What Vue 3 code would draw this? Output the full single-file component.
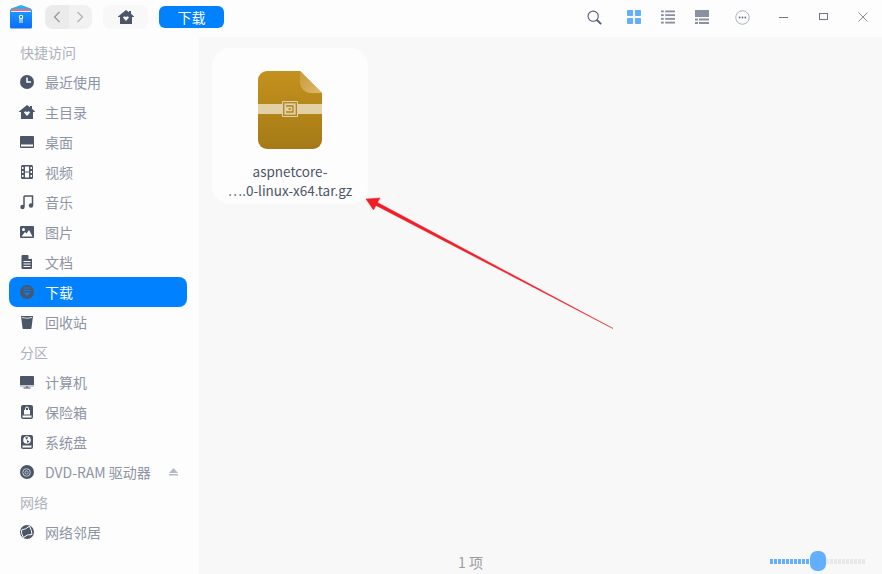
<template>
  <div class="window">
    <header class="titlebar">
      <svg class="logo" width="22" height="24" viewBox="0 0 22 24">
        <defs>
          <linearGradient id="logoBlue" x1="0" y1="0" x2="0" y2="1">
            <stop offset="0" stop-color="#1c9dff" />
            <stop offset="1" stop-color="#0d6cf8" />
          </linearGradient>
        </defs>
        <path d="M1 3.500 11 0l10 3.500V7H1z" fill="#27b0f8" />
        <path d="M0 5.500q0-1.500 1.500-1.500h19q1.500 0 1.500 1.500V22q0 1.500-1.500 1.500h-19Q0 23.500 0 22z" fill="url(#logoBlue)" />
        <rect x="1.500" y="4" width="19" height="2" fill="#f56a78" />
        <rect x="1" y="6" width="20" height="1" fill="#fff" opacity=".85" />
        <circle cx="11" cy="12" r="1.700" fill="none" stroke="#fff" stroke-width="1.100" />
        <path d="M10 13.500V18M12 13.500V18" stroke="#fff" stroke-width="1" />
      </svg>

      <div class="nav-group">
        <button class="nav-btn back">
          <svg width="10" height="14" viewBox="0 0 10 14"><path d="M7.500 2 2.500 7l5 5" fill="none" stroke="#8b93a2" stroke-width="1.100" /></svg>
        </button>
        <button class="nav-btn">
          <svg width="10" height="14" viewBox="0 0 10 14"><path d="M2.500 2l5 5-5 5" fill="none" stroke="#a9afbb" stroke-width="1.100" /></svg>
        </button>
      </div>

      <button class="home-btn">
        <svg width="16" height="14" viewBox="0 0 16 14"><path :d="homePath" fill="#4d5568" fill-rule="evenodd" /></svg>
      </button>

      <button class="crumb">下载</button>

      <div class="tools">
        <svg class="search" width="15" height="15" viewBox="0 0 17 17">
          <circle cx="7" cy="7" r="5.800" fill="none" stroke="#566176" stroke-width="1.300" />
          <path d="M11 11l5 5" stroke="#566176" stroke-width="2.200" />
        </svg>
        <svg class="grid" width="14" height="14" viewBox="0 0 15 15" fill="#62aeff">
          <rect width="6.500" height="6.500" rx=".8" />
          <rect x="8.500" width="6.500" height="6.500" rx=".8" />
          <rect y="8.500" width="6.500" height="6.500" rx=".8" />
          <rect x="8.500" y="8.500" width="6.500" height="6.500" rx=".8" />
        </svg>
        <svg class="list" width="14" height="14" viewBox="0 0 15 15" fill="#8a909e">
          <rect y="0.500" width="3" height="2" /><rect x="4.500" y="0.500" width="10.500" height="2" />
          <rect y="4.500" width="3" height="2" /><rect x="4.500" y="4.500" width="10.500" height="2" />
          <rect y="8.500" width="3" height="2" /><rect x="4.500" y="8.500" width="10.500" height="2" />
          <rect y="12.500" width="3" height="2" /><rect x="4.500" y="12.500" width="10.500" height="2" />
        </svg>
        <svg class="list" width="14" height="14" viewBox="0 0 14 14" fill="#8a909e">
          <rect width="14" height="7" />
          <rect y="8.500" width="3" height="2" /><rect x="4" y="8.500" width="10" height="2" />
          <rect y="12" width="3" height="2" /><rect x="4" y="12" width="10" height="2" />
        </svg>
        <svg class="menu-icon" width="15" height="15" viewBox="0 0 16 16">
          <circle cx="8" cy="8" r="7.200" fill="none" stroke="#a8adb9" stroke-width="1" />
          <circle cx="5" cy="8" r="1" fill="#6a7180" /><circle cx="8" cy="8" r="1" fill="#6a7180" /><circle cx="11" cy="8" r="1" fill="#6a7180" />
        </svg>
        <svg class="win-min" width="9" height="10" viewBox="0 0 9 10"><path d="M0 5.500h9" stroke="#6f7683" stroke-width="1" /></svg>
        <svg class="win-max" width="9" height="10" viewBox="0 0 9 10"><rect x=".5" y="1.500" width="8" height="6" fill="none" stroke="#6f7683" stroke-width="1" /></svg>
        <svg class="win-close" width="10" height="10" viewBox="0 0 10 10"><path d="M.5.500l9 9M9.500.500l-9 9" stroke="#7d8390" stroke-width=".9" /></svg>
      </div>
    </header>

    <div class="body">
      <aside class="sidebar">
        <template v-for="item in sidebar" :key="item.label">
          <div v-if="item.heading" class="group-title">{{ item.label }}</div>
          <div v-else :class="['side-item', { active: item.active }]">
            <svg class="side-icon" width="16" height="16" viewBox="0 0 16 16" v-html="icons[item.icon]"></svg>
            <span class="side-label">{{ item.label }}</span>
            <svg v-if="item.eject" class="eject" width="9" height="8" viewBox="0 0 9 8" fill="#b4b9c3">
              <path d="M4.500 0 9 5H0z" /><rect y="6" width="9" height="1.500" />
            </svg>
          </div>
        </template>
      </aside>

      <main class="content">
        <div class="file-grid">
          <div class="file-card">
            <svg width="66" height="80" viewBox="0 0 66 80" class="file-icon">
              <defs>
                <linearGradient id="archive" x1="0" y1="0" x2="0" y2="1">
                  <stop offset="0" stop-color="#c3911d" />
                  <stop offset="1" stop-color="#a57a16" />
                </linearGradient>
                <linearGradient id="fold" x1="0" y1="0" x2="1" y2="1">
                  <stop offset="0" stop-color="#c79a35" />
                  <stop offset="1" stop-color="#deb970" />
                </linearGradient>
              </defs>
              <path d="M10 1h33l22 22v47a9 9 0 0 1-9 9H10a9 9 0 0 1-9-9V10a9 9 0 0 1 9-9z" fill="url(#archive)" />
              <path d="M43 1l22 22H54a11 11 0 0 1-11-11z" fill="url(#fold)" />
              <rect x="1" y="34" width="64" height="10" fill="#e2d0a6" />
              <rect x="25" y="31" width="16" height="16" rx="1" fill="#e2d0a6" />
              <rect x="26.700" y="32.700" width="12.600" height="12.600" fill="none" stroke="#ae8420" stroke-width="1.300" />
              <path d="M29 36h7v6h-7M31.500 39h2.500" fill="none" stroke="#ae8420" stroke-width="1.300" />
            </svg>
            <div class="file-name">aspnetcore-<br />⋯.0-linux-x64.tar.gz</div>
          </div>
        </div>
        <footer class="statusbar">
          <span class="count">1 项</span>
          <div class="slider">
            <span class="track on"></span>
            <span class="thumb"></span>
            <span class="track off"></span>
          </div>
        </footer>
        <!-- annotation drawn over the screenshot -->
        <svg class="arrow" width="260" height="145" viewBox="0 0 260 145">
          <path d="M6 9 20 8 17.500 12.500 253 138.500 16 15.500 13.500 20z" fill="#f01f27" stroke="#f01f27" stroke-width=".5" stroke-linejoin="round" />
        </svg>
      </main>
    </div>
  </div>
</template>

<script setup>
const homePath = 'M8 0l3 2.300V1h2v2.800L16 6.500V7h-2v7H2V7H0v-.5zM5 7.500 8 11l3-3.500L9.800 6.300 8 7 6.200 6.300z'

const icons = {
  clock: '<circle cx="8" cy="8" r="7" fill="#4d5568"/><path d="M8 3.500V8h4" fill="none" stroke="#fff" stroke-width="1.500"/>',
  home: `<path d="${homePath}" transform="translate(0 1)" fill="#4d5568" fill-rule="evenodd"/>`,
  desktop: '<path d="M2 2h12a1 1 0 0 1 1 1v10a1 1 0 0 1-1 1H2a1 1 0 0 1-1-1V3a1 1 0 0 1 1-1z" fill="#4d5568"/><rect x="2" y="10.500" width="12" height="2" fill="#fff"/>',
  video: '<rect x="2" y="1" width="12" height="14" rx="1.500" fill="#4d5568"/><g fill="#fff"><rect x="3" y="3" width="1.500" height="2"/><rect x="3" y="7" width="1.500" height="2"/><rect x="3" y="11" width="1.500" height="2"/><rect x="11.500" y="3" width="1.500" height="2"/><rect x="11.500" y="7" width="1.500" height="2"/><rect x="11.500" y="11" width="1.500" height="2"/><rect x="6" y="2.500" width="4" height="5"/><rect x="6" y="8.500" width="4" height="5"/></g>',
  music: '<path d="M5 12.500V3q0-1 1-1h7.500v9" fill="none" stroke="#4d5568" stroke-width="1.500"/><circle cx="3.500" cy="13" r="2.200" fill="#4d5568"/><circle cx="12" cy="11.500" r="2.200" fill="#4d5568"/>',
  image: '<rect x="1" y="2" width="14" height="12" rx="1" fill="#4d5568"/><circle cx="4.500" cy="5.500" r="1.500" fill="#fff"/><path d="M2.500 12.500 6 8l1.500 1.500L10 6l3.500 6.500z" fill="#fff"/>',
  doc: '<path d="M3.500 1H9l4 4v9a1 1 0 0 1-1 1H3.500a1 1 0 0 1-1-1V2a1 1 0 0 1 1-1z" fill="#4d5568"/><path d="M9.500 1v4h3.500z" fill="#fff"/><path d="M4.500 7.500h7M4.500 10h7M4.500 12.500h7" stroke="#fff" stroke-width="1"/>',
  download: '<circle cx="8" cy="8" r="7" fill="#4d5568"/><path d="M4.500 4h7M4.500 6.500h7" stroke="#0081ff" stroke-width="1.200"/><path d="M4.500 8.500h7L8 12z" fill="#0081ff"/>',
  trash: '<path d="M2 2h12L12.500 14a1 1 0 0 1-1 1h-7a1 1 0 0 1-1-1z" fill="#4d5568"/><path d="M3 3.500q5 1.500 10 0" fill="none" stroke="#fff" stroke-width=".8"/>',
  computer: '<path d="M1 3a1 1 0 0 1 1-1h12a1 1 0 0 1 1 1v8H1z" fill="#4d5568"/><rect x="1" y="11.500" width="14" height="1" fill="#8f95a3"/><rect x="7" y="12.500" width="2" height="1" fill="#4d5568"/><rect x="4.500" y="13.500" width="7" height="1" fill="#4d5568"/>',
  vault: '<rect x="2" y="1" width="12" height="14" rx="2" fill="#4d5568"/><rect x="3.500" y="11.500" width="9" height="2" fill="#fff"/><rect x="5" y="6" width="6" height="4.500" fill="#fff"/><path d="M6.500 6V4.500a1.500 1.500 0 0 1 3 0V6" fill="none" stroke="#fff" stroke-width="1"/>',
  disk: '<rect x="2" y="1" width="12" height="14" rx="2" fill="#4d5568"/><rect x="3.500" y="11.500" width="9" height="2" fill="#fff"/><circle cx="8" cy="6" r="3.800" fill="#fff"/><path d="M8 6 6 3.500 9 3zM8 6l2.500 1.500L8 9z" fill="#4d5568"/>',
  dvd: '<circle cx="8" cy="8" r="7" fill="#4d5568"/><circle cx="7.500" cy="8.500" r="3.800" fill="none" stroke="#c6cad2" stroke-width="1"/><circle cx="7.500" cy="8.500" r="1.600" fill="none" stroke="#c6cad2" stroke-width="1"/>',
  network: '<circle cx="8" cy="8" r="7" fill="#4d5568"/><path d="M2.500 6Q7 5.500 10.500 2M10.500 2q2.500 5 2.500 8.500M13 10.500Q8 10 4.500 13.500M2.500 6q-.5 4 2 7.500" fill="none" stroke="#fff" stroke-width="1"/>'
}

const sidebar = [
  { label: '快捷访问', heading: true },
  { label: '最近使用', icon: 'clock' },
  { label: '主目录', icon: 'home' },
  { label: '桌面', icon: 'desktop' },
  { label: '视频', icon: 'video' },
  { label: '音乐', icon: 'music' },
  { label: '图片', icon: 'image' },
  { label: '文档', icon: 'doc' },
  { label: '下载', icon: 'download', active: true },
  { label: '回收站', icon: 'trash' },
  { label: '分区', heading: true },
  { label: '计算机', icon: 'computer' },
  { label: '保险箱', icon: 'vault' },
  { label: '系统盘', icon: 'disk' },
  { label: 'DVD-RAM 驱动器', icon: 'dvd', eject: true },
  { label: '网络', heading: true },
  { label: '网络邻居', icon: 'network' }
]
</script>

<style>
html, body {
  margin: 0;
  background: #f8f8f8;
}
</style>

<style scoped>
.window {
  width: 882px;
  height: 574px;
  display: flex;
  flex-direction: column;
  overflow: hidden;
  font-family: "Noto Sans CJK SC", "Noto Sans", sans-serif;
  font-size: 14px;
}

button {
  border: none;
  padding: 0;
  font-family: inherit;
}

.titlebar {
  height: 37px;
  flex: none;
  display: flex;
  align-items: center;
  background: #fdfdfe;
  padding: 0 0 3px 10px;
  box-sizing: border-box;
}

.logo {
  margin-right: 13px;
}

.nav-group {
  width: 47px;
  height: 24px;
  display: flex;
  border-radius: 8px;
  overflow: hidden;
  background: #f1f1f2;
}

.nav-btn {
  flex: 1;
  display: flex;
  align-items: center;
  justify-content: center;
  background: transparent;
}

.nav-btn.back {
  background: #ebebec;
}

.home-btn {
  width: 45px;
  height: 24px;
  margin-left: 11px;
  display: flex;
  align-items: center;
  justify-content: center;
  border-radius: 8px;
  background: #f8f8f8;
}

.crumb {
  width: 65px;
  height: 22px;
  margin-left: 11px;
  border-radius: 6px;
  background: #0081ff;
  color: #fff;
  font-size: 14px;
  line-height: 20px;
}

.tools {
  margin-left: auto;
  display: flex;
  align-items: center;
  padding-right: 14px;
}

.search { margin-right: 25px; }
.grid { margin-right: 20px; }
.list { margin-right: 20px; }
.list + .menu-icon { margin-left: 6px; }
.menu-icon { margin-right: 29px; }
.win-min { margin-right: 31px; }
.win-max { margin-right: 30px; }

.body {
  flex: 1;
  display: flex;
  min-height: 0;
}

.sidebar {
  width: 199px;
  flex: none;
  box-sizing: border-box;
  background: #fdfdfe;
}

.group-title {
  height: 30px;
  line-height: 30px;
  padding-left: 20px;
  color: #adb1bb;
}

.side-item {
  height: 30px;
  margin: 0 12px 0 9px;
  padding-left: 10px;
  display: flex;
  align-items: center;
  border-radius: 8px;
  color: #8d94a4;
}

.side-item.active {
  background: #0081ff;
  color: #fff;
}

.side-icon {
  flex: none;
  margin-right: 10px;
}

.eject {
  margin-left: auto;
  margin-right: 9px;
}

.content {
  position: relative;
  flex: 1;
  display: flex;
  flex-direction: column;
  background: #f8f8f8;
}

.file-grid {
  flex: 1;
  padding: 11px 0 0 13px;
}

.file-card {
  width: 156px;
  height: 156px;
  box-sizing: border-box;
  padding-top: 22px;
  border-radius: 18px;
  background: #fdfdfd;
  display: flex;
  flex-direction: column;
  align-items: center;
}

.file-icon {
  flex: none;
}

.file-name {
  margin-top: 12px;
  text-align: center;
  font-size: 13.5px;
  line-height: 19px;
  color: #4d5568;
  white-space: nowrap;
}

.statusbar {
  height: 26px;
  flex: none;
  display: flex;
  align-items: center;
  position: relative;
  justify-content: center;
  box-sizing: border-box;
  padding: 2px 140px 0 0;
  color: #9a9ca3;
}

.slider {
  position: absolute;
  right: 16px;
  top: 3px;
  width: 96px;
  height: 20px;
  display: flex;
  align-items: center;
}

.track {
  height: 5px;
  background-image: repeating-linear-gradient(90deg, var(--c) 0 3px, transparent 3px 4px);
}

.track.on {
  --c: #62aeff;
  width: 40px;
}

.track.off {
  --c: #e8e8e8;
  flex: 1;
}

.thumb {
  width: 16px;
  height: 20px;
  border-radius: 7px;
  background: #62aeff;
}

.arrow {
  position: absolute;
  left: 161px;
  top: 153px;
  pointer-events: none;
}
</style>
